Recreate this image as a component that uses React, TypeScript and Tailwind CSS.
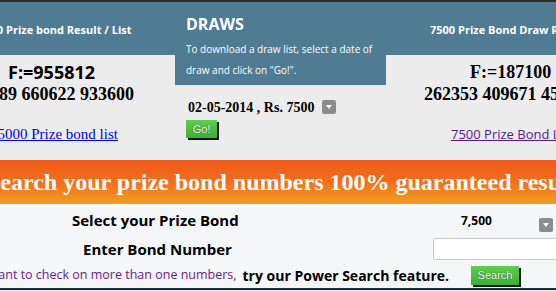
import React from "react";

const sans = { fontFamily: '"Open Sans", "Liberation Sans", sans-serif' };
const serif = { fontFamily: '"Liberation Serif", serif' };

function DropArrow() {
  return (
    <span className="inline-flex h-[14px] w-[14px] items-center justify-center rounded-[2px] bg-[#8c8c8c]">
      <span className="h-0 w-0 border-x-[3px] border-t-[4px] border-x-transparent border-t-white" />
    </span>
  );
}

function GreenButton({ label, className }: { label: string; className: string }) {
  return (
    <button
      className={`block bg-gradient-to-b from-[#5fcf4c] to-[#38b12f] leading-none text-white shadow-[2px_2px_0_#111] [text-shadow:0_0_1px_#114] ${className}`}
      style={{ fontFamily: '"Liberation Sans", Arial, sans-serif' }}
    >
      {label}
    </button>
  );
}

export default function App() {
  return (
    <div className="h-[292px] w-[556px] overflow-hidden border-t-2 border-[#2a2a2a] bg-[#dfe3e8]">
      {/* Top results row */}
      <div className="flex h-[158px] bg-[#ececec]">
        {/* Left column */}
        <div className="flex w-[175px] shrink-0 flex-col overflow-hidden">
          <div className="flex h-[53px] items-center bg-[#4f7c93] pt-[3px]">
            <span className="-ml-[22px] whitespace-nowrap text-[11px] font-bold text-white" style={sans}>
              7500 Prize bond Result / List
            </span>
          </div>
          <div className="flex flex-col pt-[6px]">
            <span className="ml-[8px] whitespace-nowrap text-[18px] font-bold leading-[23px] text-black" style={sans}>
              F:=955812
            </span>
            <span className="-ml-[10px] whitespace-nowrap text-[18px] font-bold leading-[20px] text-black" style={serif}>
              289 660622 933600
            </span>
            <a
              href="#"
              className="-ml-[10px] mt-[20px] whitespace-nowrap text-[15px] leading-[20px] text-[#0000ee] underline"
              style={serif}
            >
              15000 Prize bond list
            </a>
          </div>
        </div>

        {/* Middle column */}
        <div className="flex w-[211px] shrink-0 flex-col">
          <div className="h-[83px] bg-[#4f7c93] px-[11px] pt-[12px] text-white" style={sans}>
            <div className="text-[16px] font-bold leading-[20px]">DRAWS</div>
            <div className="mt-[5px] text-[10px] leading-[21px]">
              To download a draw list, select a date of draw and click on "Go!".
            </div>
          </div>
          <div className="mt-[13px] flex h-[18px] items-center gap-[8px] pl-[13px]">
            <span className="whitespace-nowrap text-[14px] font-bold text-black" style={serif}>
              02-05-2014 , Rs. 7500
            </span>
            <DropArrow />
          </div>
          <div className="pl-[11px] pt-[4px]">
            <GreenButton label="Go!" className="h-[18px] w-[31px] text-[11px]" />
          </div>
        </div>

        {/* Right column */}
        <div className="flex w-[170px] shrink-0 flex-col overflow-hidden">
          <div className="flex h-[53px] items-center bg-[#4f7c93] pl-[44px] pt-[3px]">
            <span className="whitespace-nowrap text-[11px] font-bold text-white" style={sans}>
              7500 Prize Bond Draw Result
            </span>
          </div>
          <div className="flex flex-col pt-[6px]" style={serif}>
            <span className="ml-[84px] whitespace-nowrap text-[18px] font-bold leading-[23px] text-black">
              F:=187100
            </span>
            <span className="ml-[38px] whitespace-nowrap text-[18px] font-bold leading-[20px] text-black">
              262353 409671 456789
            </span>
            <a
              href="#"
              className="ml-[65px] mt-[20px] whitespace-nowrap text-[13px] leading-[20px] text-[#551a8b] underline"
              style={sans}
            >
              7500 Prize Bond List
            </a>
          </div>
        </div>
      </div>

      {/* Orange banner */}
      <div className="flex h-[44px] items-center overflow-hidden bg-gradient-to-b from-[#f15a19] via-[#f26e1b] to-[#f39c21]">
        <span className="-ml-[13px] whitespace-nowrap text-[24px] font-bold text-white" style={serif}>
          Search your prize bond numbers 100% guaranteed results
        </span>
      </div>

      {/* Search panel */}
      <div className="flex h-[84px] flex-col bg-[#f4f6f8] pt-[3px]" style={sans}>
        <div className="flex h-[27px] items-center">
          <span className="ml-[72px] w-[300px] shrink-0 whitespace-nowrap text-[15px] font-bold text-black">
            Select your Prize Bond
          </span>
          <span className="ml-[89px] shrink-0 text-[12px] font-bold text-black">7,500</span>
          <span className="ml-[47px] shrink-0">
            <DropArrow />
          </span>
        </div>
        <div className="flex h-[30px] items-center">
          <span className="ml-[83px] w-[350px] shrink-0 whitespace-nowrap text-[15px] font-bold text-black">
            Enter Bond Number
          </span>
          <input className="h-[22px] w-[140px] shrink-0 rounded-[2px] border border-[#c8c8c8] bg-white" />
        </div>
        <div className="flex h-[22px] items-center whitespace-nowrap">
          <span className="-ml-[47px] shrink-0 text-[12.5px] text-[#6a1b8a]">
            If you want to check on more than one numbers,
          </span>
          <span className="ml-[6px] shrink-0 text-[14px] font-bold text-black">try our Power Search feature.</span>
          <GreenButton label="Search" className="ml-[22px] h-[19px] w-[48px] shrink-0 text-[11px]" />
        </div>
      </div>
      <div className="h-[2px] bg-[#1b2838]" />
    </div>
  );
}
